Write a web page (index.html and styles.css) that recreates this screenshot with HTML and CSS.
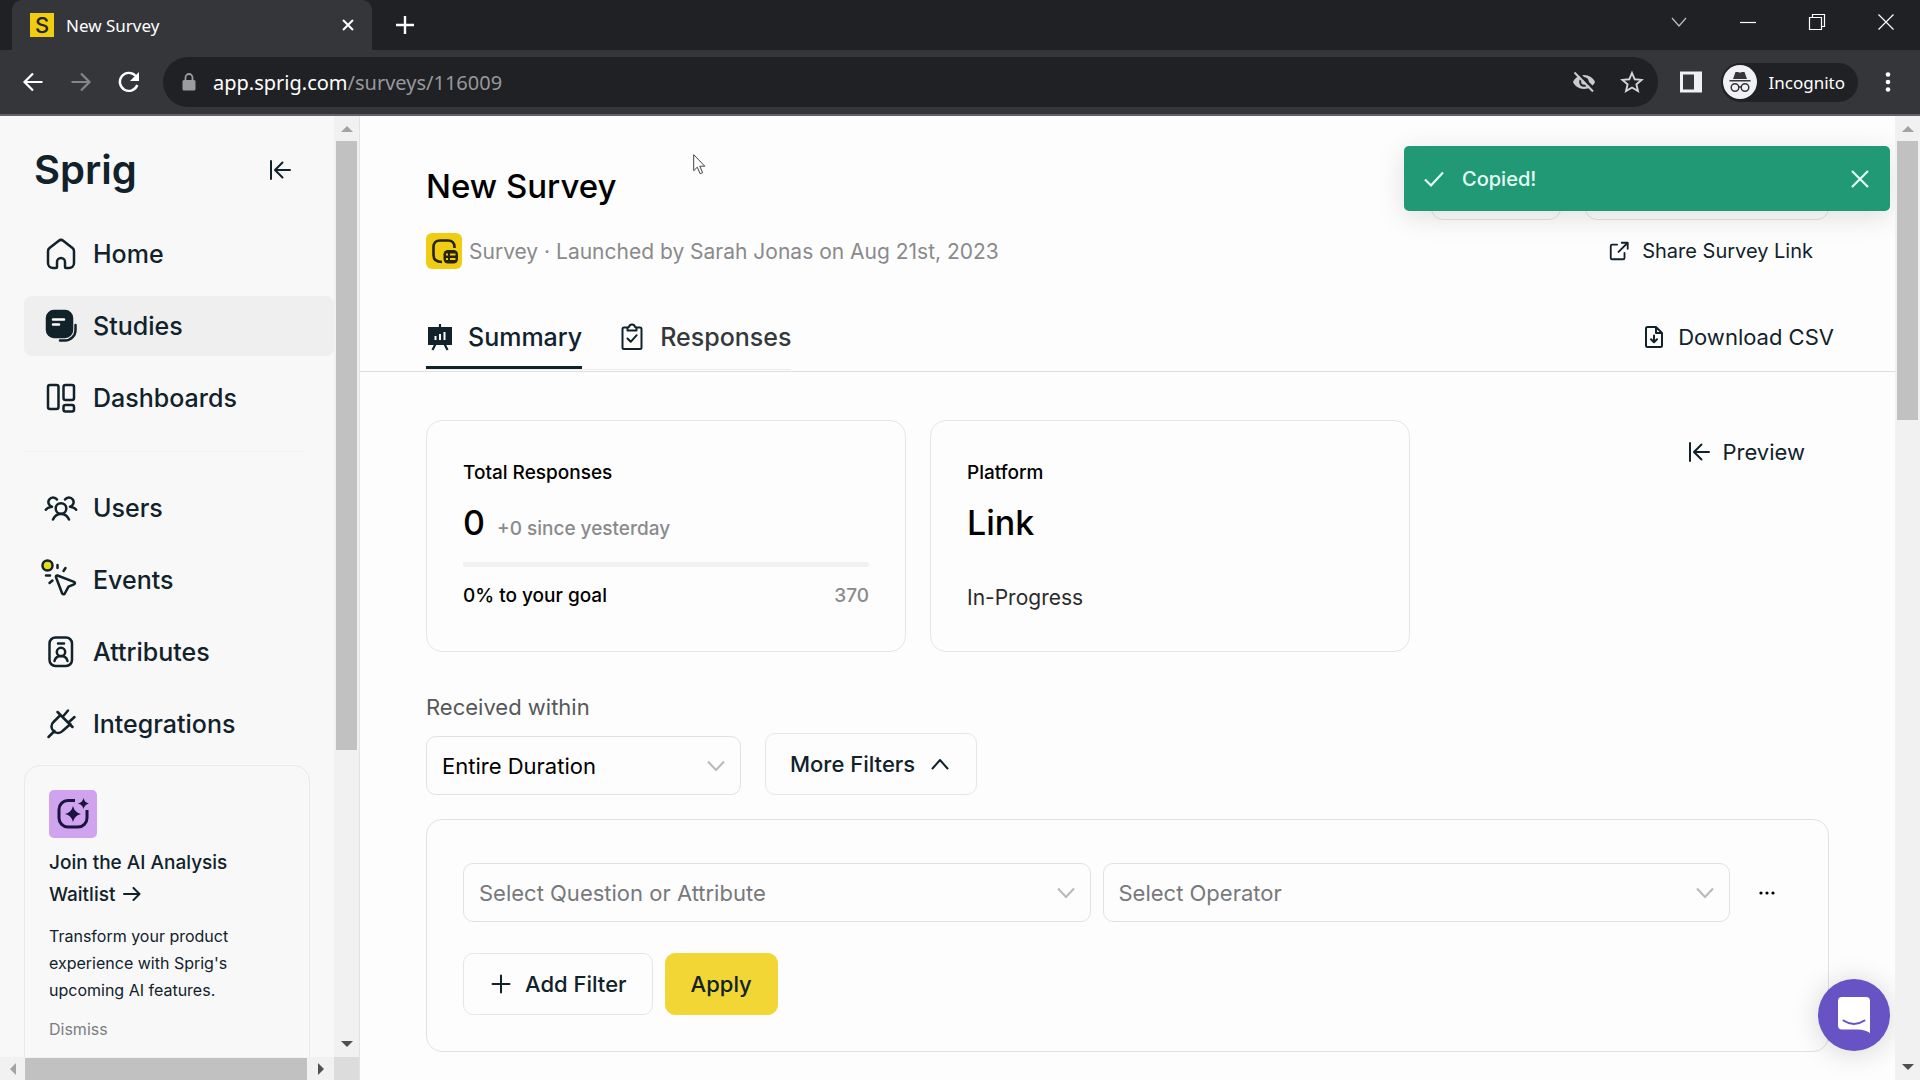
FILE: index.html
```html
<!DOCTYPE html>
<html lang="en">
<head>
<meta charset="utf-8">
<meta name="viewport" content="width=device-width, initial-scale=1">
<title>New Survey</title>
<link rel="stylesheet" href="styles.css">
</head>
<body>
<header class="browser">
  <div class="tabstrip">
    <div class="tab">
      <span class="favicon">S</span>
      <span class="tab-title">New Survey</span>
      <button class="chrome-btn" aria-label="Close tab"><svg width="16" height="16" viewBox="0 0 16 16"><path d="M3 3l10 10M13 3L3 13" stroke="#fff" stroke-width="2" fill="none"/></svg></button>
    </div>
    <button class="chrome-btn new-tab" aria-label="New tab"><svg width="20" height="20" viewBox="0 0 20 20"><path d="M10 1v18M1 10h18" stroke="#fff" stroke-width="2.4" fill="none"/></svg></button>
    <div class="window-controls">
      <button class="win-btn" aria-label="Search tabs"><svg width="18" height="18" viewBox="0 0 18 18"><path d="M2 5l7 8 7-8" stroke="#bbb" stroke-width="1.3" fill="none"/></svg></button>
      <button class="win-btn" aria-label="Minimize"><svg width="18" height="18" viewBox="0 0 18 18"><path d="M1 9.500h16" stroke="#fff" stroke-width="1.200"/></svg></button>
      <button class="win-btn" aria-label="Restore"><svg width="18" height="18" viewBox="0 0 18 18"><path d="M1.500 4.500h12v12h-12zM4.500 4V1.500h12v12H14" stroke="#fff" stroke-width="1.200" fill="none"/></svg></button>
      <button class="win-btn" aria-label="Close"><svg width="18" height="18" viewBox="0 0 18 18"><path d="M1.500 1.500l15 15M16.500 1.500l-15 15" stroke="#fff" stroke-width="1.200"/></svg></button>
    </div>
  </div>
  <div class="toolbar">
    <div class="history">
      <button class="chrome-btn" aria-label="Back"><svg width="24" height="24" viewBox="0 0 24 24"><path d="M21.500 12H4M12 3.500L3.500 12l8.500 8.500" stroke="#fff" stroke-width="2.200" fill="none"/></svg></button>
      <button class="chrome-btn" aria-label="Forward"><svg width="24" height="24" viewBox="0 0 24 24"><path d="M2.500 12H20M12 3.500l8.500 8.500-8.500 8.500" stroke="#85868a" stroke-width="2.200" fill="none"/></svg></button>
      <button class="chrome-btn" aria-label="Reload"><svg width="24" height="24" viewBox="0 0 24 24"><path d="M20.300 15A9 9 0 1 1 18.500 5.800" stroke="#fff" stroke-width="2.400" fill="none"/><path d="M22 2v9h-9z" fill="#fff"/></svg></button>
    </div>
    <div class="omnibox">
      <svg width="14" height="18" viewBox="0 0 14 18"><rect x="0.500" y="7" width="13" height="10.500" rx="1.500" fill="#9b9ca0"/><path d="M3.500 8V4.500a3.500 3.500 0 0 1 7 0V8" stroke="#9b9ca0" stroke-width="1.800" fill="none"/></svg>
      <span class="url"><span class="url-host">app.sprig.com</span>/surveys/116009</span>
      <svg width="24" height="24" viewBox="0 0 24 24"><path d="M12 5C7 5 2.700 8 1 12c1.700 4 6 7 11 7s9.300-3 11-7c-1.700-4-6-7-11-7z" fill="#c9cacc"/><circle cx="12" cy="12" r="4.800" fill="#202124"/><circle cx="12" cy="12" r="2.800" fill="#c9cacc"/><path d="M4.500 1.500L23 20" stroke="#202124" stroke-width="3"/><path d="M2.500 2.500L21 21.500" stroke="#c9cacc" stroke-width="2"/></svg>
      <svg width="24" height="24" viewBox="0 0 24 24"><path d="M12 3l2.700 6.300 6.900.6-5.200 4.500 1.600 6.700-6-3.600-6 3.600 1.600-6.700L2.400 9.900l6.900-.6z" stroke="#d5d6d8" stroke-width="1.900" fill="none"/></svg>
    </div>
    <div class="toolbar-end">
      <button class="chrome-btn" aria-label="Side panel"><svg width="24" height="24" viewBox="0 0 24 24"><path d="M1 1.500h22v21H1zM4 4.500v15h11v-15z" fill="#f1f1f3" fill-rule="evenodd"/></svg></button>
      <div class="profile">
        <svg width="34" height="34" viewBox="0 0 34 34"><circle cx="17" cy="17" r="17" fill="#f1f1f3"/><path d="M12.500 7h2.500l2 .8 2-.8h2.500l2.500 7H10zM6.500 15h21v1.500h-21z" fill="#35363a"/><g fill="none" stroke="#35363a" stroke-width="1.500"><circle cx="12" cy="22.500" r="3.800"/><circle cx="22" cy="22.500" r="3.800"/><path d="M15.500 22.200q1.500-1 3 0"/></g></svg>
        <span>Incognito</span>
      </div>
      <button class="chrome-btn" aria-label="Menu"><svg width="24" height="24" viewBox="0 0 24 24" fill="#fff"><circle cx="12" cy="4.500" r="2.300"/><circle cx="12" cy="12" r="2.300"/><circle cx="12" cy="19.500" r="2.300"/></svg></button>
    </div>
  </div>
</header>

<div class="app">
  <aside class="sidebar">
    <div class="sidebar-body">
      <div class="brand-row">
        <a class="brand" href="#">Sprig</a>
        <button class="plain-btn" aria-label="Collapse sidebar"><svg class="line-icon" width="24" height="24" viewBox="0 0 24 24"><path d="M3 3v18M22 12H8M14.500 4.500L7 12l7.500 7.500"/></svg></button>
      </div>
      <nav class="nav">
        <a class="nav-item" href="#"><svg class="line-icon" width="32" height="32" viewBox="0 0 32 32"><path d="M13.500 2.900a4 4 0 0 1 5 0l9 7.200a4 4 0 0 1 1.500 3.100V25a5 5 0 0 1-5 5h-3a1 1 0 0 1-1-1v-5a4 4 0 0 0-8 0v5a1 1 0 0 1-1 1H8a5 5 0 0 1-5-5V13.200a4 4 0 0 1 1.500-3.100z"/></svg>Home</a>
        <a class="nav-item active" href="#"><svg class="line-icon" width="32" height="32" viewBox="0 0 32 32"><rect x="2" y="1" width="25" height="26" rx="7" fill="#11222b"/><path d="M8 9.500h11M8 14.500h6" stroke="#fff"/><path d="M30.500 15v5a10.500 10.500 0 0 1-10.500 10.500h-5"/></svg>Studies</a>
        <a class="nav-item" href="#"><svg class="line-icon" width="32" height="32" viewBox="0 0 32 32"><rect x="3" y="3" width="10.500" height="24" rx="2"/><rect x="18.500" y="3" width="10.500" height="15" rx="2"/><rect x="18.500" y="23" width="10.500" height="6.500" rx="2"/></svg>Dashboards</a>
      </nav>
      <hr class="nav-rule">
      <nav class="nav">
        <a class="nav-item" href="#"><svg class="line-icon" width="32" height="32" viewBox="0 0 32 32"><circle cx="16" cy="16.500" r="5.300"/><path d="M8 27.500c1.500-3.500 4.500-5.500 8-5.500s6.500 2 8 5.500M12 7.500a4.700 4.700 0 1 0-5 7.200C4 15 2 16 .8 17.700M20 7.500a4.700 4.700 0 1 1 5 7.200c3 .3 5 1.300 6.200 3"/></svg>Users</a>
        <a class="nav-item" href="#"><svg class="line-icon" width="32" height="32" viewBox="0 0 32 32"><path d="M12.500 11.500l16.500 6.300c1.300.6 1.300 2 0 2.500l-5.500 2.400-3.700 6.800c-.7 1.200-2.200 1-2.700-.3L11 13.200c-.4-1.200.4-2.100 1.500-1.700zM12.500 1v3M20.500 4l-2 3M1 11.500h4M4.500 19l3-2.500"/><circle cx="2.500" cy="1.500" r="5" fill="#e6dc19"/></svg>Events</a>
        <a class="nav-item" href="#"><svg class="line-icon" width="32" height="32" viewBox="0 0 32 32"><rect x="4.500" y="1.500" width="22.500" height="28.500" rx="6"/><path d="M13 7.500h6M9.500 25c.8-3.300 3-5 6.500-5s5.700 1.700 6.500 5"/><circle cx="16" cy="16" r="4.200"/></svg>Attributes</a>
        <a class="nav-item" href="#"><svg class="line-icon" width="32" height="32" viewBox="0 0 32 32"><path d="M3.500 29l6-6M12.500 4l15 15M15.500 7l-7 7a6 6 0 0 0 0 9 6 6 0 0 0 9 0l8-7M17.500 9l5.500-6.500M23.500 14.500l6-5.500"/></svg>Integrations</a>
      </nav>
      <section class="promo">
        <svg class="promo-icon" width="48" height="48" viewBox="0 0 48 48"><rect width="48" height="48" rx="5" fill="#cfa3ee"/><path d="M26 10.500h-7a9 9 0 0 0-9 9V28a9 9 0 0 0 9 9h10a9 9 0 0 0 9-9v-8" fill="none" stroke="#1b1440" stroke-width="3"/><path d="M24 16q1.500 6.500 8 8-6.500 1.500-8 8-1.500-6.500-8-8 6.500-1.500 8-8zM34.500 8q1 4.500 5.500 5.500-4.500 1-5.500 5.500-1-4.500-5.500-5.500 4.500-1 5.500-5.500z" fill="#1b1440"/></svg>
        <h2 class="promo-title">Join the AI Analysis Waitlist <svg class="line-icon" width="18" height="14" viewBox="0 0 18 14"><path d="M1 7h15M10.500 1l6 6-6 6"/></svg></h2>
        <p class="promo-text">Transform your product experience with Sprig's upcoming AI features.</p>
        <button class="plain-btn promo-dismiss">Dismiss</button>
      </section>
    </div>
    <div class="scroll-y" aria-hidden="true"><span class="arrow up"></span><span class="thumb side-thumb"></span><span class="arrow down"></span></div>
    <div class="scroll-x" aria-hidden="true"><span class="arrow left"></span><span class="thumb"></span><span class="arrow right"></span></div>
    <div class="scroll-corner"></div>
  </aside>

  <main class="main">
    <div class="page-head">
      <div>
        <h1 class="title">New Survey</h1>
        <p class="meta"><svg width="36" height="36" viewBox="0 0 36 36"><rect width="36" height="36" rx="6" fill="#f0cc12"/><path d="M16 29c-5 0-8.500-2-8.500-7v-8c0-4 2.500-6.500 6.500-6.500h8c4 0 6.500 2.500 6.500 6.500v1" fill="none" stroke="#26230c" stroke-width="2.600"/><rect x="17.500" y="17" width="14.500" height="13.500" rx="4.500" fill="#26230c"/><path d="M20 21.500h2M24 21.500h5.500M20 26h2M24 26h5.500" stroke="#f0cc12" stroke-width="1.800"/></svg>Survey · Launched by Sarah Jonas on Aug 21st, 2023</p>
      </div>
      <div class="head-actions">
        <div class="action-row" aria-hidden="true"><span class="action short"></span><span class="action"></span></div>
        <a class="share" href="#"><svg class="line-icon" width="22" height="22" viewBox="0 0 24 24"><path d="M10 5H4.500A1.500 1.500 0 0 0 3 6.500v13A1.500 1.500 0 0 0 4.500 21h12a1.500 1.500 0 0 0 1.500-1.500V14M15 3h6.500v6.500M21.500 3L11.500 13"/></svg>Share Survey Link</a>
      </div>
    </div>
    <div class="tab-row">
      <div class="tabs" role="tablist">
        <button class="page-tab selected" role="tab" aria-selected="true"><svg width="28" height="28" viewBox="0 0 28 28"><path d="M2 4h24v18H2z" fill="#11222b"/><path d="M14 1v4M9.500 21l-3 6M18.500 21l3 6" stroke="#11222b" stroke-width="2.200"/><path d="M9.500 17v-4M14 17v-6M18.500 17V9" stroke="#fff" stroke-width="2"/></svg>Summary</button>
        <button class="page-tab" role="tab" aria-selected="false"><svg class="line-icon" width="28" height="28" viewBox="0 0 28 28"><path d="M9 4.500H6A1.500 1.500 0 0 0 4.500 6v18.500A1.500 1.500 0 0 0 6 26h16a1.500 1.500 0 0 0 1.500-1.500V6A1.500 1.500 0 0 0 22 4.500h-3M9.500 15.500l3.200 3.300 6-6.600"/><path d="M9.500 7.500V5.500a1.500 1.500 0 0 1 1.500-1.500c.3-1.500 1.500-2.500 3-2.500s2.700 1 3 2.500a1.500 1.500 0 0 1 1.500 1.500v2z"/></svg>Responses</button>
      </div>
      <button class="plain-btn download"><svg class="line-icon" width="24" height="24" viewBox="0 0 24 24"><path d="M14 2H5.500A1.500 1.500 0 0 0 4 3.500v17A1.500 1.500 0 0 0 5.500 22h13a1.500 1.500 0 0 0 1.500-1.500V8zM14 2v6h6M12 10.500V17M9 14.200l3 3 3-3"/></svg>Download CSV</button>
    </div>

    <div class="content">
      <div class="stats">
        <section class="card">
          <h3 class="label">Total Responses</h3>
          <p class="figure">0<span class="delta">+0 since yesterday</span></p>
          <div class="bar"></div>
          <p class="goal"><span>0% to your goal</span><span class="goal-total">370</span></p>
        </section>
        <section class="card">
          <h3 class="label">Platform</h3>
          <p class="figure">Link</p>
          <p class="status">In-Progress</p>
        </section>
        <button class="plain-btn preview"><svg class="line-icon" width="24" height="24" viewBox="0 0 24 24"><path d="M3 3v18M22 12H8M14.500 4.500L7 12l7.500 7.500"/></svg>Preview</button>
      </div>

      <label class="within" for="within">Received within</label>
      <div class="filter-row">
        <div class="select duration"><select id="within"><option>Entire Duration</option></select><svg width="18" height="12" viewBox="0 0 18 12"><path d="M1 1.500l8 8.500 8-8.500"/></svg></div>
        <button class="btn more">More Filters <svg class="line-icon" width="18" height="12" viewBox="0 0 18 12"><path d="M1.500 10.500L9 2l7.500 8.500"/></svg></button>
      </div>

      <section class="filters">
        <div class="condition">
          <div class="select muted"><select aria-label="Question or attribute"><option>Select Question or Attribute</option></select><svg width="18" height="12" viewBox="0 0 18 12"><path d="M1 1.500l8 8.500 8-8.500"/></svg></div>
          <div class="select muted"><select aria-label="Operator"><option>Select Operator</option></select><svg width="18" height="12" viewBox="0 0 18 12"><path d="M1 1.500l8 8.500 8-8.500"/></svg></div>
          <button class="plain-btn dots" aria-label="More"><svg width="18" height="6" viewBox="0 0 18 6"><circle cx="3" cy="3" r="1.600"/><circle cx="9" cy="3" r="1.600"/><circle cx="15" cy="3" r="1.600"/></svg></button>
        </div>
        <div class="filter-actions">
          <button class="btn"><svg class="line-icon" width="24" height="24" viewBox="0 0 24 24"><path d="M12 3.500v17M3.500 12h17"/></svg>Add Filter</button>
          <button class="btn apply">Apply</button>
        </div>
      </section>
    </div>

    <div class="toast" role="status">
      <svg width="24" height="24" viewBox="0 0 24 24"><path d="M3 12.500l6 6L21 5.500"/></svg>
      <span class="toast-text">Copied!</span>
      <button class="plain-btn" aria-label="Dismiss"><svg width="24" height="24" viewBox="0 0 24 24"><path d="M4 4l16 16M20 4L4 20"/></svg></button>
    </div>
    <button class="chat" aria-label="Chat"><svg width="32" height="36" viewBox="0 0 32 36"><path d="M4 0h24a4 4 0 0 1 4 4v32q-5-3.500-12-3.500H4a4 4 0 0 1-4-4V4a4 4 0 0 1 4-4z" fill="#fff"/><path d="M5.500 23.500q10.500 7 21 0" fill="none" stroke="#6753c3" stroke-width="2" stroke-linecap="round"/></svg></button>
    <svg class="cursor" width="14" height="21" viewBox="0 0 14 21"><path d="M.7.700v16l3.600-3.500 2.800 6.500 2.500-1-2.800-6.500h5z" fill="#fff" stroke="#444" stroke-width="1"/></svg>
  </main>
  <div class="scroll-y page-scroll" aria-hidden="true"><span class="arrow up"></span><span class="thumb page-thumb"></span><span class="arrow down"></span></div>
</div>
</body>
</html>
```
FILE: styles.css
```css
* { box-sizing: border-box; }
body {
  margin: 0;
  height: 100vh;
  display: flex;
  flex-direction: column;
  overflow: hidden;
  font-family: Inter, "Liberation Sans", sans-serif;
  color: #11222b;
  background: #fdfdfd;
}
h1, h2, h3, p { margin: 0; font-weight: 500; }
svg { display: block; flex: none; }
a { color: inherit; text-decoration: none; }
button, select { font: inherit; color: inherit; }
.line-icon {
  fill: none;
  stroke: #11222b;
  stroke-width: 2;
  stroke-linecap: round;
  stroke-linejoin: round;
}
.plain-btn, .chrome-btn, .win-btn {
  border: 0;
  padding: 0;
  background: none;
  display: flex;
  align-items: center;
}

/* browser frame */
.browser {
  flex: none;
  background: #35363a;
  border-bottom: 2px solid #626367;
  color: #fff;
  font-family: "Noto Sans", "Open Sans", sans-serif;
}
.tabstrip { height: 50px; display: flex; align-items: center; background: #202124; padding-left: 12px; }
.tab {
  width: 360px;
  height: 50px;
  display: flex;
  align-items: center;
  gap: 12px;
  padding: 0 16px 0 18px;
  background: #35363a;
  border-radius: 10px 10px 0 0;
}
.favicon {
  width: 24px;
  height: 24px;
  background: #f0cc12;
  color: #222;
  font: 500 22px/24px Inter, sans-serif;
  text-align: center;
}
.tab-title { flex: 1; font-size: 17px; }
.new-tab { margin-left: 23px; }
.window-controls { margin-left: auto; align-self: flex-start; display: flex; }
.win-btn { width: 69px; height: 44px; justify-content: center; }
.toolbar { height: 64px; display: flex; align-items: center; padding: 0 20px 0 21px; }
.history { width: 142px; display: flex; gap: 24px; }
.omnibox {
  flex: 1;
  height: 50px;
  display: flex;
  align-items: center;
  gap: 24px;
  padding: 0 14px 0 19px;
  border-radius: 25px;
  background: #202124;
}
.url { flex: 1; margin-left: -7px; font-size: 20px; color: #97989c; }
.url-host { color: #fff; }
.toolbar-end { display: flex; align-items: center; gap: 18px; padding-left: 21px; }
.profile {
  height: 39px;
  display: flex;
  align-items: center;
  gap: 12px;
  padding: 0 13px 0 2px;
  border-radius: 20px;
  background: #202124;
  font-size: 17px;
}

/* scrollbars */
.app { flex: 1; min-height: 0; display: flex; }
.scroll-y, .scroll-x { display: flex; align-items: center; background: #f1f1f1; }
.scroll-y { flex-direction: column; padding: 10px 0; }
.page-scroll { width: 25px; flex: none; }
.thumb { flex: 1; background: #c1c1c1; }
.scroll-y .thumb { width: 21px; flex: none; margin: 9px 0 auto; }
.side-thumb { height: 609px; }
.page-thumb { height: 279px; }
.scroll-x { padding: 0 10px; }
.scroll-x .thumb { height: 22px; margin: 0 11px 0 9px; }
.arrow { border: 6px solid transparent; }
.up { border-top: 0; border-bottom-color: #a3a3a3; }
.down { border-bottom: 0; border-top-color: #505050; }
.left { border-left: 0; border-right-color: #a3a3a3; }
.right { border-right: 0; border-left-color: #505050; }

/* sidebar */
.sidebar {
  width: 360px;
  flex: none;
  display: grid;
  grid-template-columns: 1fr 25px;
  grid-template-rows: minmax(0, 1fr) 23px;
  border-right: 1px solid #e3e3e4;
  background: #f8f8f9;
}
.sidebar-body { overflow: hidden; padding: 24px 0 0 24px; }
.scroll-corner { background: #dcdcdc; }
.brand-row { height: 60px; display: flex; align-items: center; justify-content: space-between; padding: 0 42px 0 10px; }
.brand { font-size: 40px; line-height: 60px; font-weight: 600; }
.nav { display: flex; flex-direction: column; gap: 12px; }
.brand-row + .nav { margin-top: 24px; }
.nav-item {
  height: 60px;
  display: flex;
  align-items: center;
  gap: 16px;
  padding-left: 21px;
  border-radius: 8px;
  font-size: 25px;
  font-weight: 500;
}
.nav-item svg { overflow: visible; stroke-width: 2.500; }
.active { background: #efeff0; }
.nav-rule { margin: 23px 30px 26px 0; border: 0; border-top: 1px solid #f2f2f3; }
.promo {
  width: 286px;
  height: 320px;
  margin-top: 11px;
  padding: 24px;
  border: 1px solid #e9e9ea;
  border-radius: 16px;
}
.promo-title { margin-top: 9px; font-size: 19px; line-height: 32px; }
.promo-title svg { display: inline-block; margin-left: 3px; }
.promo-text { margin-top: 12px; font-size: 16px; line-height: 27px; font-weight: 400; }
.promo-dismiss { margin-top: 12px; font-size: 16px; line-height: 27px; color: #7b7d80; }

/* page header */
.main { flex: 1; min-width: 0; position: relative; overflow: hidden; }
.page-head { display: flex; justify-content: space-between; padding: 42px 66px 0 66px; }
.title { font-size: 33px; line-height: 56px; color: #000; }
.meta { display: flex; align-items: center; gap: 7px; margin-top: 19px; font-size: 21px; font-weight: 400; color: #8a8a8c; }
.action-row { display: flex; gap: 24px; }
.action { width: 244px; height: 62px; border: 1px solid #e2e2e3; border-radius: 12px; }
.action.short { width: 130px; }
.share { display: flex; align-items: center; justify-content: flex-end; gap: 12px; margin-top: 19px; padding-right: 16px; font-size: 20px; }
.tab-row {
  display: flex;
  justify-content: space-between;
  align-items: flex-end;
  margin-top: 33px;
  padding: 0 61px 1px 66px;
  border-bottom: 1px solid #dfdfe1;
}
.tabs { display: flex; gap: 36px; border-bottom: 1px solid #ececee; }
.page-tab {
  height: 67px;
  display: flex;
  align-items: center;
  gap: 14px;
  padding: 6px 0 0;
  border: 0;
  border-bottom: 3px solid transparent;
  background: none;
  font-size: 25px;
  font-weight: 500;
  color: #33383b;
}
.selected { border-color: #11222b; color: #11222b; }
.download { height: 66px; gap: 12px; font-size: 22px; }

/* summary */
.content { padding: 48px 66px 28px 66px; }
.stats { display: grid; grid-template-columns: 1fr 1fr 395px; gap: 24px; align-items: start; }
.card {
  height: 232px;
  padding: 36px;
  border: 1px solid #e6e6e8;
  border-radius: 16px;
  color: #000;
}
.label { font-size: 19px; line-height: 32px; font-weight: 500; }
.figure { display: flex; align-items: baseline; gap: 12px; margin-top: 12px; font-size: 34px; line-height: 44px; }
.delta { font-size: 19px; color: #8a8a8c; }
.bar { height: 5px; margin-top: 11px; background: #f1f1f2; border-radius: 2px; }
.goal { display: flex; justify-content: space-between; margin-top: 13px; font-size: 19px; line-height: 32px; }
.goal-total { color: #8a8a8c; }
.status { margin-top: 37px; font-size: 21px; line-height: 32px; font-weight: 400; color: #2b2b2b; }
.preview { justify-self: end; height: 64px; gap: 12px; padding-right: 24px; font-size: 22px; }

/* filters */
.within { display: block; margin-top: 39px; font-size: 22px; line-height: 32px; color: #55585a; }
.filter-row { display: flex; align-items: flex-end; gap: 24px; margin-top: 10px; }
.select { display: grid; align-items: center; flex: 1; }
.select > * { grid-area: 1 / 1; }
.select select {
  appearance: none;
  width: 100%;
  height: 59px;
  padding: 0 44px 0 15px;
  border: 1px solid #e2e2e4;
  border-radius: 10px;
  background: #fdfdfd;
  font-size: 22px;
  color: #000;
}
.select svg { justify-self: end; margin-right: 16px; fill: none; stroke: #b9b9bb; stroke-width: 2; pointer-events: none; }
.select.muted select { color: #77797b; }
.select.duration { flex: 0 0 315px; }
.btn {
  height: 62px;
  display: flex;
  align-items: center;
  gap: 12px;
  padding: 0 25px;
  border: 1px solid #e6e6e8;
  border-radius: 10px;
  background: #fdfdfd;
  font-size: 22px;
  font-weight: 500;
}
.more { gap: 16px; padding: 0 27px 0 24px; }
.filters { margin-top: 24px; padding: 43px 36px 36px; border: 1px solid #e2e2e4; border-radius: 16px; }
.condition { display: flex; gap: 12px; }
.dots { width: 50px; justify-content: center; }
.filter-actions { display: flex; gap: 12px; margin-top: 31px; }
.apply { background: #f1d635; border-color: #f1d635; }

/* overlays */
.toast {
  position: absolute;
  top: 30px;
  right: 5px;
  width: 486px;
  height: 65px;
  display: flex;
  align-items: center;
  gap: 16px;
  padding: 0 18px;
  border-radius: 5px;
  background: #219975;
  box-shadow: 0 6px 28px rgba(0, 0, 0, 0.12);
  color: #e4fff6;
  font-size: 20px;
  font-weight: 500;
}
.toast svg { fill: none; stroke: #e4fff6; stroke-width: 2.200; }
.toast-text { flex: 1; }
.chat {
  position: absolute;
  right: 5px;
  bottom: 29px;
  width: 72px;
  height: 72px;
  display: flex;
  align-items: center;
  justify-content: center;
  border: 0;
  border-radius: 50%;
  background: #6753c3;
  box-shadow: 0 2px 28px rgba(0, 0, 0, 0.16);
}
.cursor { position: absolute; left: 333px; top: 38px; }
```
